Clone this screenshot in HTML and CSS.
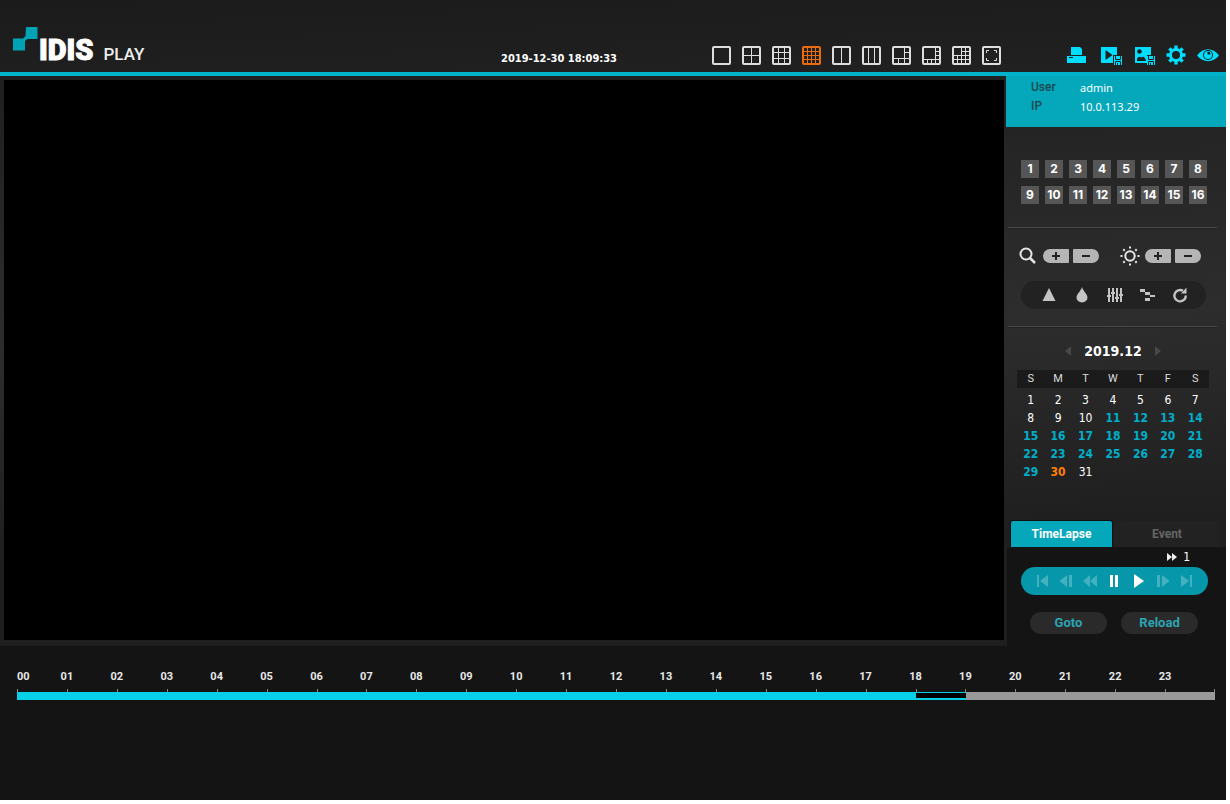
FILE: index.html
```html
<!DOCTYPE html>
<html lang="en">
<head>
<meta charset="utf-8">
<title>IDIS Play</title>
<link rel="stylesheet" href="styles.css">
</head>
<body>
<div class="app">
  <header class="topbar">
    <div class="brand">
      <svg class="brand-mark" width="25" height="24" viewBox="0 0 25 24"><path fill="#00a3b4" d="M13 0h11.500v12H14.500L12 14v9.500H0V11.500h10L12.500 9z"/></svg>
      <span class="brand-name">IDIS</span>
      <span class="brand-product">PLAY</span>
    </div>
    <time class="clock">2019-12-30 18:09:33</time>
    <nav class="layouts" aria-label="Screen layout">
      <button aria-label="1 screen"><svg viewBox="0 0 19 19"><rect x="1" y="1" width="17" height="17" rx="1"/></svg></button>
      <button aria-label="4 screens"><svg viewBox="0 0 19 19"><rect x="1" y="1" width="17" height="17" rx="1"/><path d="M9.500 2v15M2 9.500h15"/></svg></button>
      <button aria-label="9 screens"><svg viewBox="0 0 19 19"><rect x="1" y="1" width="17" height="17" rx="1"/><path d="M6.500 2v15M12.500 2v15M2 6.500h15M2 12.500h15"/></svg></button>
      <button class="active" aria-label="16 screens"><svg viewBox="0 0 19 19"><rect x="1" y="1" width="17" height="17" rx="1"/><path d="M5.500 2v15M9.500 2v15M13.500 2v15M2 5.500h15M2 9.500h15M2 13.500h15"/></svg></button>
      <button aria-label="2 columns"><svg viewBox="0 0 19 19"><rect x="1" y="1" width="17" height="17" rx="1"/><path d="M9.500 2v15"/></svg></button>
      <button aria-label="3 columns"><svg viewBox="0 0 19 19"><rect x="1" y="1" width="17" height="17" rx="1"/><path d="M6.500 2v15M12.500 2v15"/></svg></button>
      <button aria-label="1 plus 5"><svg viewBox="0 0 19 19"><rect x="1" y="1" width="17" height="17" rx="1"/><path d="M12.500 2v15M2 12.500h15M12 6.500h5M6.500 12v5"/></svg></button>
      <button aria-label="1 plus 7"><svg viewBox="0 0 19 19"><rect x="1" y="1" width="17" height="17" rx="1"/><path d="M13.500 2v15M2 13.500h15M13 5.500h4M13 9.500h4M5.500 13v4M9.500 13v4"/></svg></button>
      <button aria-label="1 plus 12"><svg viewBox="0 0 19 19"><rect x="1" y="1" width="17" height="17" rx="1"/><path d="M9.500 2v15M13.500 2v15M5.500 9v8M2 9.500h15M2 13.500h15M9 5.500h8"/></svg></button>
      <button aria-label="Full screen"><svg viewBox="0 0 19 19"><rect x="1" y="1" width="17" height="17" rx="1"/><path d="M4.500 7V4.500H7M12 4.500h2.500V7M14.500 12v2.500H12M7 14.500H4.500V12"/></svg></button>
    </nav>
    <nav class="actions" aria-label="Actions">
      <button class="wide" aria-label="Print"><svg width="19" height="20" viewBox="0 0 19 20"><path d="M4 2h9l2 2v6H4zM0 11h19v7H0z"/><path class="cut" d="M2 12h4v1H2z"/></svg></button>
      <button class="wide" aria-label="Save video"><svg width="21" height="20" viewBox="0 0 21 20"><path fill-rule="evenodd" d="M0 2h16v8h-4v8H0zM4.500 5v10L11.500 10z"/><path d="M13 11h8v9h-8z"/><path class="line" d="M14.500 11v3.500h5V11M14.500 20v-3.500h5V20M16.500 18v2"/></svg></button>
      <button aria-label="Save image"><svg width="20" height="20" viewBox="0 0 20 20"><path fill-rule="evenodd" d="M0 2h16v8h-4v8H0zM2 16h9C10 11.500 8 11 6.500 12.500 5 11 3 12 2 14z"/><circle class="cut" cx="4.500" cy="6.500" r="2.300"/><path d="M12 11h8v9h-8z"/><path class="line" d="M13.500 11v3.500h5V11M13.500 20v-3.500h5V20M15.500 18v2"/></svg></button>
      <button aria-label="Settings"><svg width="20" height="20" viewBox="-10 -10 20 20"><circle r="5.500" fill="none" stroke="#00deff" stroke-width="3"/><path stroke="#00deff" stroke-width="3.400" d="M0-9.500v4M0 9.500v-4M-9.500 0h4M9.500 0h-4M-6.600-6.600l2.800 2.800M6.600 6.600L3.800 3.800M6.600-6.600L3.800-3.800M-6.600 6.600l2.800-2.800"/></svg></button>
      <button class="last" aria-label="View"><svg width="22" height="20" viewBox="0 0 22 20"><path d="M0 10.500C6 2 16 2 22 10.500 16 18 6 18 0 10.500z"/><circle class="cut" cx="11" cy="10" r="5"/><circle cx="11" cy="10" r="4"/><path class="cut" d="M10.500 9.500V6.500a3 3 0 0 1 3 3z"/></svg></button>
    </nav>
  </header>

  <div class="workspace">
    <main class="viewer" aria-label="Video"></main>
    <aside class="sidebar">
      <dl class="user">
        <dt>User</dt><dd>admin</dd>
        <dt>IP</dt><dd>10.0.113.29</dd>
      </dl>
      <div class="channels">
        <button>1</button><button>2</button><button>3</button><button>4</button><button>5</button><button>6</button><button>7</button><button>8</button>
        <button>9</button><button>10</button><button>11</button><button>12</button><button>13</button><button>14</button><button>15</button><button>16</button>
      </div>
      <hr class="rule">
      <div class="adjust">
        <div class="stepper">
          <svg class="symbol" width="20" height="20" viewBox="0 0 20 20"><circle cx="8" cy="8" r="5.500" stroke-width="2"/><path d="M12 12l5 5" stroke-width="2.500"/></svg>
          <button class="plus" aria-label="Zoom in"><svg width="10" height="10" viewBox="0 0 10 10"><path d="M1 5h8M5 1v8"/></svg></button>
          <button class="minus" aria-label="Zoom out"><svg width="10" height="10" viewBox="0 0 10 10"><path d="M1 5h8"/></svg></button>
        </div>
        <div class="stepper">
          <svg class="symbol" width="20" height="20" viewBox="-10 -10 20 20"><circle r="4.700" stroke-width="2"/><path stroke-width="2" d="M0-9.500v2M0 9.500v-2M-9.500 0h2M9.500 0h-2M-6.700-6.700l1.400 1.400M6.700 6.700L5.300 5.300M6.700-6.700L5.300-5.300M-6.700 6.700l1.400-1.400"/></svg>
          <button class="plus" aria-label="Brighter"><svg width="10" height="10" viewBox="0 0 10 10"><path d="M1 5h8M5 1v8"/></svg></button>
          <button class="minus" aria-label="Darker"><svg width="10" height="10" viewBox="0 0 10 10"><path d="M1 5h8"/></svg></button>
        </div>
      </div>
      <div class="filters">
        <button aria-label="Sharpen"><svg viewBox="0 0 16 16"><path d="M8 1l6.500 13h-13z"/></svg></button>
        <button aria-label="Blur"><svg viewBox="0 0 16 16"><path d="M8 0C9 4 13.500 7 13.500 10.500a5.500 5 0 0 1-11 0C2.500 7 7 4 8 0z"/></svg></button>
        <button aria-label="Equalize"><svg viewBox="0 0 16 16"><path d="M1 1h2v14H1zM5 1h2v14H5zM9 1h2v14H9zM13 1h2v14h-2zM0 8h4v2H0zM4 5h4v2H4zM8 10h4v2H8zM12 7h4v2h-4z"/></svg></button>
        <button aria-label="Interpolate"><svg viewBox="0 0 16 16"><path d="M1 2h5v3H1zM6 5h5v3H6zM11 8h5v2h-5zM6 11h5v3H6z"/></svg></button>
        <button aria-label="Reset"><svg viewBox="0 0 16 16"><path fill="none" stroke="#c4c4c4" stroke-width="2.400" d="M11 3.800A5.700 5.700 0 1 0 13.800 8.500"/><path d="M9 6.500h5.500V0.500z"/></svg></button>
      </div>
      <hr class="rule rule-tools">
      <div class="month">
        <button aria-label="Previous month"><svg width="6" height="10" viewBox="0 0 6 10"><path d="M6 0v10L0 5z"/></svg></button>
        <span>2019.12</span>
        <button aria-label="Next month"><svg width="6" height="10" viewBox="0 0 6 10"><path d="M0 0v10l6-5z"/></svg></button>
      </div>
      <table class="calendar">
        <thead><tr><th>S</th><th>M</th><th>T</th><th>W</th><th>T</th><th>F</th><th>S</th></tr></thead>
        <tbody>
          <tr><td>1</td><td>2</td><td>3</td><td>4</td><td>5</td><td>6</td><td>7</td></tr>
          <tr><td>8</td><td>9</td><td>10</td><td class="rec">11</td><td class="rec">12</td><td class="rec">13</td><td class="rec">14</td></tr>
          <tr><td class="rec">15</td><td class="rec">16</td><td class="rec">17</td><td class="rec">18</td><td class="rec">19</td><td class="rec">20</td><td class="rec">21</td></tr>
          <tr><td class="rec">22</td><td class="rec">23</td><td class="rec">24</td><td class="rec">25</td><td class="rec">26</td><td class="rec">27</td><td class="rec">28</td></tr>
          <tr><td class="rec">29</td><td class="today">30</td><td>31</td><td></td><td></td><td></td><td></td></tr>
        </tbody>
      </table>
      <div class="tabs" role="tablist">
        <button class="tab selected" role="tab" aria-selected="true">TimeLapse</button>
        <button class="tab" role="tab" aria-selected="false">Event</button>
      </div>
      <div class="playback">
        <div class="speed"><svg width="10" height="8" viewBox="0 0 10 8"><path fill="#eee" d="M0 0l5 4-5 4zM5 0l5 4-5 4z"/></svg><span>1</span></div>
        <div class="transport">
          <button disabled aria-label="First"><svg viewBox="0 0 14 14"><path d="M2 1h2v12H2zM13 1v12L5 7z"/></svg></button>
          <button disabled aria-label="Step back"><svg viewBox="0 0 14 14"><path d="M8 1v12L.5 7zM10 1h3v12h-3z"/></svg></button>
          <button disabled aria-label="Rewind"><svg viewBox="0 0 14 14"><path d="M7 1v12L0 7zM14 1v12L7 7z"/></svg></button>
          <button aria-label="Pause"><svg viewBox="0 0 14 14"><path d="M3 1h3v12H3zM8 1h3v12H8z"/></svg></button>
          <button aria-label="Play"><svg viewBox="0 0 14 14"><path d="M2 0l10 7-10 7z"/></svg></button>
          <button disabled aria-label="Step forward"><svg viewBox="0 0 14 14"><path d="M6 1v12l7.500-6zM1 1h3v12H1z"/></svg></button>
          <button disabled aria-label="Last"><svg viewBox="0 0 14 14"><path d="M10 1h2v12h-2zM1 1v12l8-6z"/></svg></button>
        </div>
        <div class="commands"><button>Goto</button><button>Reload</button></div>
      </div>
    </aside>
  </div>

  <footer class="timeline">
    <ol class="hours">
      <li>00</li><li>01</li><li>02</li><li>03</li><li>04</li><li>05</li><li>06</li><li>07</li><li>08</li><li>09</li><li>10</li><li>11</li><li>12</li><li>13</li><li>14</li><li>15</li><li>16</li><li>17</li><li>18</li><li>19</li><li>20</li><li>21</li><li>22</li><li>23</li>
    </ol>
    <div class="ticks"><i></i><i></i><i></i><i></i><i></i><i></i><i></i><i></i><i></i><i></i><i></i><i></i><i></i><i></i><i></i><i></i><i></i><i></i><i></i><i></i><i></i><i></i><i></i><i></i></div>
    <div class="track"><div class="recorded"></div><div class="current"></div></div>
  </footer>
</div>
</body>
</html>
```

FILE: styles.css
```css
* { box-sizing: border-box; }

body {
  margin: 0;
  padding: 0 4px 4px 0;
  height: 100vh;
  background: #fff;
  color: #fff;
  font-family: "DejaVu Sans Condensed", "Noto Sans", sans-serif;
  font-size: 12px;
}

button {
  display: flex;
  align-items: center;
  justify-content: center;
  margin: 0;
  padding: 0;
  border: 0;
  background: none;
  color: inherit;
  font: inherit;
}

svg { display: block; flex: none; }

.app {
  display: flex;
  flex-direction: column;
  min-height: 100%;
  background: linear-gradient(178deg, #1b1b1b 0, #1f1f1f 76px, #252525 180px, #2d2d2d 350px, #1f1f1f 560px, #1f1f1f 100%);
}

/* Top bar */
.topbar {
  display: flex;
  align-items: flex-end;
  height: 76px;
  padding: 0 7px 7px 13px;
  border-bottom: 4px solid #00b3cb;
}

.brand { display: flex; align-items: baseline; height: 38px; }
.brand-mark { align-self: flex-start; }

.brand-name {
  margin-left: 1px;
  font: 900 29px/46px Roboto, sans-serif;
  -webkit-text-stroke: 1px #fff;
}

.brand-product {
  margin-left: 10px;
  font: 500 17px/24px Roboto, sans-serif;
  color: #eee;
}

.clock {
  margin: 0 95px 0 auto;
  font-size: 11px;
  font-weight: bold;
  line-height: 12px;
}

.layouts { display: flex; gap: 11px; margin-right: 66px; }
.layouts svg { width: 19px; height: 19px; fill: none; stroke: #dedede; }
.layouts rect { stroke-width: 2px; }
.layouts .active svg { stroke: #ea6c10; }

.actions { display: flex; align-items: center; }
.actions button { justify-content: flex-start; width: 31px; }
.actions .wide { width: 34px; }
.actions .last { width: 22px; }
.actions svg { fill: #00deff; }
.actions .cut { fill: #1e1e1e; }
.actions .line { fill: none; stroke: #1e1e1e; }

/* Workspace */
.workspace { display: flex; flex: 1; }

.viewer {
  flex: 1;
  margin: 4px 2px 6px 4px;
  background: #000;
}

.sidebar { display: flex; flex-direction: column; width: 220px; }

.user {
  display: grid;
  grid-template-columns: 49px 1fr;
  margin: 0;
  padding: 2px 25px 11px;
  background: #05a7bb;
  line-height: 19px;
}

.user dt { font-family: Roboto, sans-serif; font-weight: 500; color: #1d4850; }
.user dd { margin: 0; font-family: "Noto Sans", sans-serif; font-size: 11px; }

.channels {
  display: grid;
  grid-template-columns: repeat(8, 18px);
  gap: 8px 6px;
  margin: 33px 0 0 15px;
}

.channels button {
  height: 18px;
  background: #565656;
  font: bold 12px/18px Inter, Roboto, sans-serif;
}

.rule {
  width: 209px;
  height: 2px;
  margin: 23px 0 0 2px;
  border: 0;
  border-top: 1px solid #484848;
  border-bottom: 1px solid #232323;
}

.rule-tools { margin-top: 17px; }

.adjust { display: flex; gap: 21px; margin: 17px 0 0 12px; }
.stepper { display: flex; align-items: center; gap: 4px; }
.symbol { margin-right: 1px; fill: none; stroke: #e6e6e6; }
.stepper button { width: 26px; height: 14px; background: #b5b5b5; }
.stepper button svg { stroke: #222; stroke-width: 2px; }
.plus { border-radius: 7px 1px 1px 7px; }
.minus { border-radius: 1px 7px 7px 1px; }

.filters {
  display: flex;
  align-items: center;
  justify-content: space-between;
  height: 28px;
  margin: 15px 20px 0 15px;
  padding: 0 18px 0 20px;
  border-radius: 14px;
  background: #222;
}

.filters svg { width: 16px; height: 16px; fill: #c4c4c4; }

.month {
  display: flex;
  align-items: center;
  justify-content: center;
  gap: 13px;
  margin: 12px 6px 8px 0;
  font-size: 14px;
  font-weight: bold;
  line-height: 22px;
}

.month svg { fill: #484848; }

.calendar {
  width: 192px;
  margin-left: 11px;
  border-collapse: collapse;
  table-layout: fixed;
  text-align: center;
  line-height: 18px;
}

.calendar th {
  padding: 0;
  background: #1b1b1b;
  color: #ddd;
  font: 11px/18px Roboto, sans-serif;
}

.calendar tbody::before { content: ""; display: block; height: 3px; }
.calendar td { height: 18px; padding: 0; }
.calendar .rec { color: #00afc9; font-weight: bold; }
.calendar .today { color: #ff8000; font-weight: bold; }

.tabs {
  display: flex;
  gap: 2px;
  margin: 40px 6px 0 5px;
}

.tab {
  flex: 1;
  height: 26px;
  background: #222;
  color: #666;
  font: bold 12px/26px Roboto, sans-serif;
}

.tab.selected {
  flex: 0 0 101px;
  border-radius: 2px 2px 0 0;
  background: #05a7bb;
  color: #fff;
  box-shadow: 0 0 0 1px #111;
}

.playback {
  flex: 1;
  margin-left: 1px;
  padding: 1px 18px 12px 14px;
  background: #141414;
}

.speed {
  display: flex;
  align-items: center;
  justify-content: flex-end;
  gap: 6px;
  height: 18px;
  margin-bottom: 1px;
  padding-right: 18px;
}

.transport {
  display: flex;
  align-items: center;
  justify-content: space-between;
  height: 28px;
  padding: 0 14px;
  border-radius: 14px;
  background: #0697aa;
}

.transport svg { width: 14px; height: 14px; fill: #fff; }
.transport button:disabled svg { fill: #43b1bf; }

.commands { display: flex; justify-content: space-between; margin: 17px 10px 0 9px; }

.commands button {
  width: 77px;
  height: 22px;
  border-radius: 11px;
  background: #2a2a2a;
  color: #2ca4b4;
  font: bold 13px/22px Roboto, sans-serif;
}

/* Timeline */
.timeline {
  min-height: 154px;
  padding: 23px 11px 0 17px;
  background: #141414;
}

.hours, .ticks { display: grid; grid-template-columns: repeat(24, 1fr); }

.hours {
  margin: 0;
  padding: 0;
  list-style: none;
  font: bold 11px/16px Roboto, sans-serif;
  color: #e8e8e8;
}

.hours li { margin: 0 50% 0 -50%; text-align: center; }
.hours li:first-child { margin: 0; text-align: left; }

.ticks { height: 3px; margin-top: 4px; }
.ticks i { border-left: 1px solid #888; }
.ticks i:last-child { border-right: 1px solid #888; }

.track { display: flex; height: 8px; background: #999; }
.recorded { width: 75%; background: #08cfe8; }
.current { flex: 0 0 50px; border: solid #08cfe8; border-width: 1px 0 2px; background: #000; }
```
